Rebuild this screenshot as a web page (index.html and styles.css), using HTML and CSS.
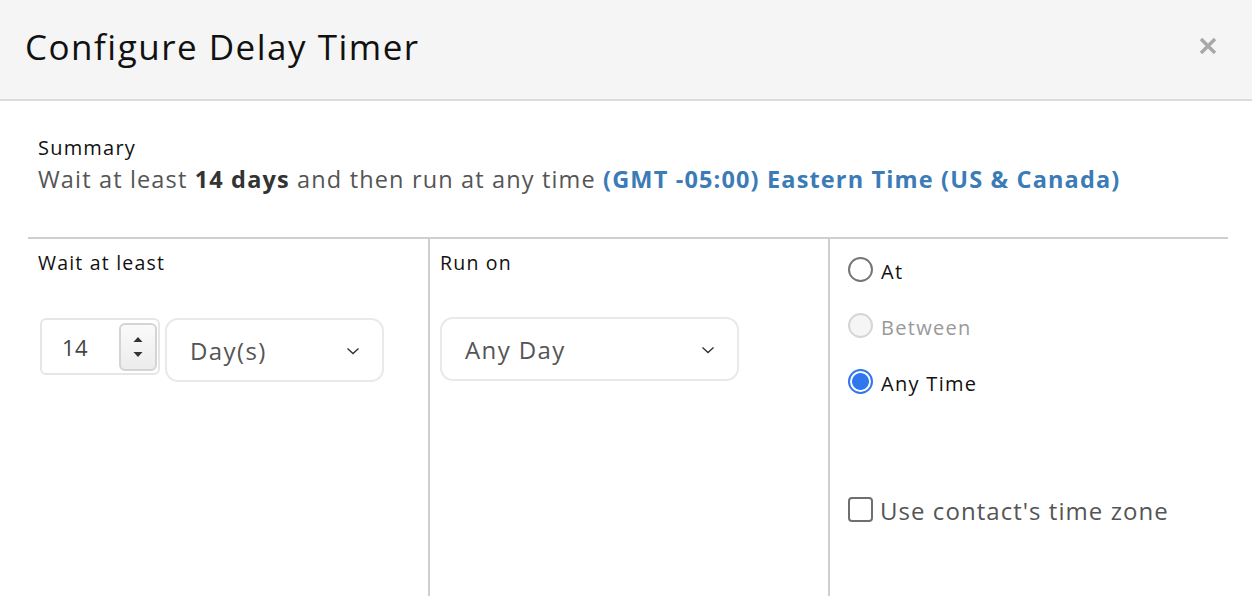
FILE: index.html
```html
<!DOCTYPE html>
<html>
<head>
<meta charset="utf-8">
<link rel="stylesheet" href="styles.css">
</head>
<body>
<div class="modal">
  <div class="header">
    <h1 class="title">Configure Delay Timer</h1>
    <div class="close">
      <svg width="18" height="18" viewBox="0 0 18 18"><path d="M2 2L16 16M16 2L2 16" stroke="#a8a8a8" stroke-width="3.4" stroke-linecap="butt"/></svg>
    </div>
  </div>
  <div class="body">
    <div class="summary">
      <div class="summary-label">Summary</div>
      <div class="summary-text">Wait at least <b>14 days</b> and then run at any time <span class="tz">(GMT -05:00) Eastern Time (US &amp; Canada)</span></div>
    </div>
    <div class="grid">
      <div class="col">
        <div class="col-label">Wait at least</div>
        <div class="row">
          <div class="num">
            <span class="num-val">14</span>
            <div class="spin">
              <svg width="12" height="36" viewBox="0 0 12 36"><path d="M1.5 13L6 8L10.5 13Z" fill="#333"/><path d="M1.5 23L6 28L10.5 23Z" fill="#333"/></svg>
            </div>
          </div>
          <div class="select sel-unit">
            <span>Day(s)</span>
            <svg class="chev" width="14" height="8" viewBox="0 0 14 8"><path d="M1.5 1.5L7 6.5L12.5 1.5" fill="none" stroke="#333" stroke-width="1.4"/></svg>
          </div>
        </div>
      </div>
      <div class="col mid">
        <div class="col-label">Run on</div>
        <div class="row">
          <div class="select sel-day">
            <span>Any Day</span>
            <svg class="chev" width="14" height="8" viewBox="0 0 14 8"><path d="M1.5 1.5L7 6.5L12.5 1.5" fill="none" stroke="#333" stroke-width="1.4"/></svg>
          </div>
        </div>
      </div>
      <div class="col right">
        <div class="radios">
          <div class="opt"><span class="radio"></span><span>At</span></div>
          <div class="opt disabled"><span class="radio dis"></span><span>Between</span></div>
          <div class="opt"><span class="radio on"></span><span>Any Time</span></div>
        </div>
        <div class="check"><span class="box"></span><span>Use contact's time zone</span></div>
      </div>
    </div>
  </div>
</div>
</body>
</html>
```
FILE: styles.css
```css
* { box-sizing: border-box; }
html, body { margin: 0; padding: 0; background: #fff; }
body { font-family: "Open Sans", Lato, sans-serif; color: #000; width: 1252px; height: 596px; overflow: hidden; }
.header {
  height: 101px;
  background: #f5f5f5;
  border-bottom: 2px solid #dcdcdc;
  display: flex;
  align-items: center;
  justify-content: space-between;
  padding: 0 35px 0 25px;
}
.title { margin: 0; font-weight: 400; font-size: 35px; letter-spacing: 1.5px; color: #111; padding-bottom: 6px; }
.close { display: flex; padding-bottom: 8px; }
.body { padding: 33px 24px 0 28px; }
.summary { padding-left: 10px; height: 103px; }
.summary-label { font-size: 20px; line-height: 28px; color: #111; letter-spacing: 1.2px; }
.summary-text { font-size: 23.5px; line-height: 34px; color: #555; letter-spacing: 1.15px; }
.summary-text b { color: #333; font-weight: 700; }
.tz { color: #3b7bb6; font-weight: 700; }
.grid {
  display: grid;
  grid-template-columns: 400px 400px 400px;
  border-top: 2px solid #cfcfcf;
  height: 360px;
}
.col { padding: 11px 10px 0 10px; }
.mid, .right { border-left: 2px solid #cfcfcf; }
.col-label { font-size: 19.5px; line-height: 26px; color: #111; letter-spacing: 1.2px; }
.row { display: flex; gap: 5px; margin-top: 42px; align-items: flex-start; }
.mid .row { margin-top: 41px; }
.num {
  width: 120px; height: 57px; margin-left: 2px;
  border: 2px solid #e6e6e6; border-radius: 6px;
  display: flex; align-items: center; justify-content: space-between;
  padding: 0 0 0 20px;
}
.num-val { font-size: 22px; color: #444; letter-spacing: 0.5px; }
.spin {
  width: 38px; height: 48px; margin-right: 1px;
  border: 2px solid #d4d4d4; border-radius: 6px;
  background: linear-gradient(#fafafa, #ececec);
  display: flex; align-items: center; justify-content: center;
}
.select {
  height: 64px;
  border: 2px solid #e9e9e9; border-radius: 13px;
  display: flex; align-items: center; justify-content: space-between;
  padding: 0 22px 0 23px;
  font-size: 24px; color: #555; letter-spacing: 1.4px;
}
.sel-unit { width: 219px; }
.sel-day { width: 299px; margin-left: 0; }
.chev { margin-top: 2px; }
.right { padding-left: 18px; padding-top: 19px; display: flex; flex-direction: column; }
.radios { display: flex; flex-direction: column; gap: 30px; }
.opt { display: flex; align-items: center; gap: 8px; font-size: 20px; color: #111; height: 26px; letter-spacing: 1.3px; }
.opt.disabled { color: #999; }
.radio {
  width: 25px; height: 25px; border-radius: 50%;
  border: 2px solid #767676; background: #fff; flex: none;
  margin-top: -4px;
}
.radio.dis { border-color: #d6d6d6; background: #f5f5f5; }
.radio.on { border: 2px solid #2f76f0; background: radial-gradient(circle, #2f76f0 0 8px, #fff 8.8px); }
.check { display: flex; align-items: center; gap: 7px; margin-top: 98px; font-size: 24px; color: #555; letter-spacing: 1.05px; }
.box { width: 25px; height: 25px; border: 2px solid #6f6f6f; border-radius: 4px; flex: none; margin-top: -2px; }
```
